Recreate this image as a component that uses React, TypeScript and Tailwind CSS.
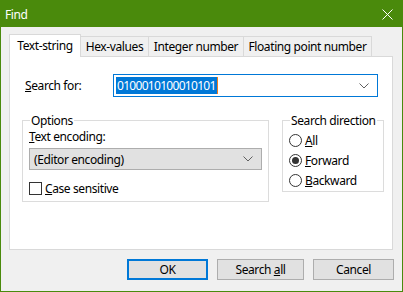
import { ReactNode } from 'react'

function Chevron() {
  return (
    <svg width="10" height="6" viewBox="0 0 10 6" className="text-[#606060]">
      <path d="M0.5 0.5 L5 5 L9.5 0.5" fill="none" stroke="currentColor" strokeWidth="1" />
    </svg>
  )
}

function Tab({ label, width, active }: { label: string; width: string; active?: boolean }) {
  if (active) {
    return (
      <div className={`${width} h-[23px] -mb-px relative z-10 bg-white border border-b-0 border-[#d9d9d9] flex items-center justify-center pb-[1px]`}>
        {label}
      </div>
    )
  }
  return (
    <div className={`${width} h-[20px] -ml-px bg-[#f0f0f0] border border-b-0 border-[#d9d9d9] flex items-center justify-center`}>
      {label}
    </div>
  )
}

function Radio({ checked, children }: { checked?: boolean; children: ReactNode }) {
  return (
    <div className="h-[20px] flex items-center gap-[3px]">
      <span className="w-[13px] h-[13px] rounded-full border border-[#333] bg-white flex items-center justify-center">
        {checked && <span className="w-[7px] h-[7px] rounded-full bg-[#333]" />}
      </span>
      <span>{children}</span>
    </div>
  )
}

function Button({ children, width, primary }: { children: ReactNode; width: string; primary?: boolean }) {
  return (
    <div
      className={`${width} h-[21px] bg-[#e1e1e1] flex items-center justify-center ${
        primary ? 'border-2 border-[#0078d7]' : 'border border-[#adadad]'
      }`}
    >
      <span>{children}</span>
    </div>
  )
}

export default function App() {
  return (
    <div className="w-[403px] h-[292px] flex flex-col border border-[#4a8a0c] bg-[#f0f0f0] font-['Noto_Sans',sans-serif] text-[12px] leading-[15px] tracking-[-0.4px] text-black whitespace-nowrap">
      {/* title bar */}
      <div className="h-[26px] shrink-0 bg-[#4a8a0c] flex items-center justify-between pl-[4px] pr-[9px] text-white">
        <span>Find</span>
        <svg width="11" height="11" viewBox="0 0 11 11">
          <path d="M0.5 0.5 L10.5 10.5 M10.5 0.5 L0.5 10.5" stroke="white" strokeWidth="1" />
        </svg>
      </div>

      <div className="flex-1 flex flex-col px-[8px] pt-[7px]">
        {/* tabs */}
        <div className="flex items-end">
          <Tab label="Text-string" width="w-[72px]" active />
          <Tab label="Hex-values" width="w-[69px]" />
          <Tab label="Integer number" width="w-[96px]" />
          <Tab label="Floating point number" width="w-[129px]" />
        </div>

        {/* panel */}
        <div className="w-[384px] h-[194px] bg-white border border-[#d9d9d9] flex flex-col">
          <div className="mt-[17px] flex items-center">
            <span className="w-[103px] pl-[15px]">
              <u>S</u>earch for:
            </span>
            <div className="w-[265px] h-[23px] border border-[#0078d7] flex items-center justify-between pl-[2px] pr-[8px]">
              <span className="flex items-center">
                <span className="bg-[#0078d7] text-white h-[17px] leading-[17px] px-[1px] tracking-[-0.7px]">0100010100010101</span>
                <span className="w-[1px] h-[17px] bg-[#f07c1c]" />
              </span>
              <Chevron />
            </div>
          </div>

          <div className="mt-[16px] flex items-start">
            <fieldset className="ml-[12px] w-[247px] border border-[#dcdcdc] px-[6px] pb-[5px]">
              <legend className="ml-[1px] px-[1px]">Options</legend>
              <div className="mt-[1px]">
                <u>T</u>ext encoding:
              </div>
              <div className="mt-[4px] h-[22px] bg-[#e1e1e1] border border-[#adadad] flex items-center justify-between pl-[4px] pr-[8px]">
                <span>(Editor encoding)</span>
                <Chevron />
              </div>
              <div className="mt-[11px] flex items-center gap-[3px]">
                <span className="w-[13px] h-[13px] border border-[#333] bg-white" />
                <span>
                  <u>C</u>ase sensitive
                </span>
              </div>
            </fieldset>

            <fieldset className="ml-[13px] w-[96px] border border-[#dcdcdc] px-[6px] pb-[1px]">
              <legend className="ml-[1px] px-[1px]">Search direction</legend>
              <div className="mt-[2px]">
                <Radio>
                  <u>A</u>ll
                </Radio>
                <Radio checked>
                  <u>F</u>orward
                </Radio>
                <Radio>
                  <u>B</u>ackward
                </Radio>
              </div>
            </fieldset>
          </div>
        </div>

        {/* buttons */}
        <div className="mt-[9px] flex justify-end gap-[9px]">
          <Button width="w-[81px]" primary>
            OK
          </Button>
          <Button width="w-[87px]">
            Search <u>a</u>ll
          </Button>
          <Button width="w-[81px]">Cancel</Button>
        </div>
      </div>
    </div>
  )
}
